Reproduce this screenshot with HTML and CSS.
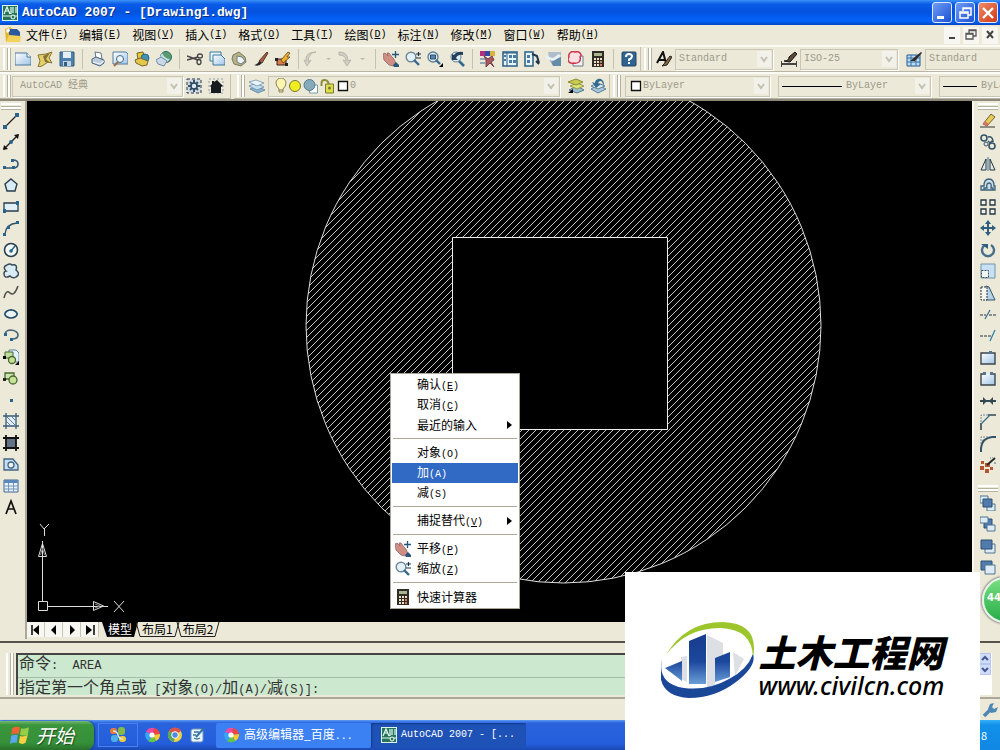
FILE: index.html
```
<!DOCTYPE html>
<html lang="zh-CN">
<head>
    <meta charset="UTF-8">
    <meta name="viewport" content="width=device-width, initial-scale=1.0">
    <title>AutoCAD 2007 - [Drawing1.dwg]</title>
    <link rel="stylesheet" href="styles.css">
</head>
<body>

<!-- Shared icons -->
<svg class="defs" aria-hidden="true">
    <defs>
        <linearGradient id="paper" x1="0" y1="0" x2="1" y2="1"><stop offset="0" stop-color="#fff"/><stop offset="1" stop-color="#9fc4e6"/></linearGradient>
        <linearGradient id="tower" x1="0" y1="0" x2="0" y2="1"><stop offset="0" stop-color="#173c8c"/><stop offset=".55" stop-color="#1c489c"/><stop offset="1" stop-color="#6a9ed8"/></linearGradient>
        <pattern id="hatch" width="7" height="7" patternUnits="userSpaceOnUse"><path d="M-1 8L8 -1M-1 1L1 -1M6 8L8 6" stroke="#dedede" stroke-width=".9"/></pattern>
    </defs>
    <symbol id="chevron" viewBox="0 0 14 16"><path d="M0 0h14v16H0z" fill="#f3f2ea"/><path d="M4 6l3 4 3-4" fill="none" stroke="#c4c1b0" stroke-width="2"/></symbol>
    <symbol id="pan" viewBox="0 0 16 16"><path d="M0 3l2-1 3 3-1-3 2 0 3 4 2 2 2 5-3 2-4-1-5-5z" fill="#cf8d84" stroke="#8d5f60" stroke-width=".7"/><path d="M10 14l3-3 3 3v2h-5z" fill="#2b5679"/><path d="M12.500 0v7M9 3.500h7" stroke="#24577b" stroke-width="1.300"/></symbol>
    <symbol id="zoom" viewBox="0 0 16 16"><circle cx="6" cy="6" r="4.800" fill="#e4f1f8" stroke="#6c8797" stroke-width="1.400"/><path d="M9 9l5 5" stroke="#36678d" stroke-width="2.400"/><path d="M11 3h5M13.500 1v4M11 7h5" stroke="#173247" stroke-width="1.200"/></symbol>
    <symbol id="calc" viewBox="0 0 16 16"><path d="M2 0h12v16H2z" fill="#302b25"/><path d="M4 2h8v3H4z" fill="#a8b58f"/><path d="M4 7h2v2H4zm3 0h2v2H7zm3 0h2v2h-2zM4 10h2v2H4zm3 0h2v2H7zM4 13h2v2H4zm3 0h2v2H7z" fill="#eee1c8"/><path d="M10 10h2v2h-2zm0 3h2v2h-2z" fill="#d87c60"/></symbol>
    <symbol id="cad" viewBox="0 0 16 16"><path d="M0 0h16v16H0z" fill="#dff6e7"/><path d="M1 1h14v14H1z" fill="#28735b"/><path d="M2 9l3-7 3 7M3 6h4M9 2v7M11 2v6M14 2v6M1 11h14" fill="none" stroke="#e4fff2" stroke-width="1.200"/><circle cx="11" cy="12" r="2" fill="#28735b" stroke="#fff"/></symbol>
    <symbol id="wheel" viewBox="0 0 16 16"><path d="M8 8L1 5a7.500 7.500 0 0 1 8-4z" fill="#f04aa0"/><path d="M8 8l1-7a7.500 7.500 0 0 1 6 6z" fill="#f3443f"/><path d="M8 8l7-1a7.500 7.500 0 0 1-4 7z" fill="#ffc928"/><path d="M8 8l3 6a7.500 7.500 0 0 1-8 0z" fill="#61c749"/><path d="M8 8l-5 6a7.500 7.500 0 0 1-2-9z" fill="#37a5f4"/><circle cx="7" cy="8" r="2.600" fill="#fff"/></symbol>
    <symbol id="layers" viewBox="0 0 16 16"><path d="M1 11l8 4 7-3-8-4z" fill="#91b4ce" stroke="#4d789d" stroke-width=".7"/><path d="M0 8l8 4 7-3-8-4z" fill="#c5def0" stroke="#5780a1" stroke-width=".7"/><path d="M0 4l8 4 7-3-8-3z" fill="#e9f4fb" stroke="#6285a1" stroke-width=".7"/></symbol>
</svg>

<header class="titlebar">
    <svg class="icon"><use href="#cad"/></svg>
    <h1>AutoCAD 2007 - [Drawing1.dwg]</h1>
    <div class="window-buttons">
        <button aria-label="最小化"><svg viewBox="0 0 16 16"><path d="M3 11h7v3H3z" fill="#fff"/></svg></button>
        <button aria-label="还原"><svg viewBox="0 0 16 16"><path d="M6 6V3h8v7h-3M3 7h8v6H3zM3 8h8M6 3.500h8" fill="none" stroke="#fff" stroke-width="1.500"/></svg></button>
        <button class="close" aria-label="关闭"><svg viewBox="0 0 16 16"><path d="M3 3l10 10M13 3L3 13" stroke="#fff" stroke-width="2.400"/></svg></button>
    </div>
</header>

<nav class="menubar">
    <svg class="icon" viewBox="0 0 16 16"><path d="M0 2l5-2 4 3 6 4v8H1z" fill="#e5b52c"/><path d="M4 2h8l3 3v6H4z" fill="#2b599b"/><path d="M1 3l3-2 1 3-3 2z" fill="#fff"/><path d="M1 15l3-7 12 1-1 6z" fill="#f4d259"/></svg>
    <button>文件<span class="en">(<u>F</u>)</span></button>
    <button>编辑<span class="en">(<u>E</u>)</span></button>
    <button>视图<span class="en">(<u>V</u>)</span></button>
    <button>插入<span class="en">(<u>I</u>)</span></button>
    <button>格式<span class="en">(<u>O</u>)</span></button>
    <button>工具<span class="en">(<u>T</u>)</span></button>
    <button>绘图<span class="en">(<u>D</u>)</span></button>
    <button>标注<span class="en">(<u>N</u>)</span></button>
    <button>修改<span class="en">(<u>M</u>)</span></button>
    <button>窗口<span class="en">(<u>W</u>)</span></button>
    <button>帮助<span class="en">(<u>H</u>)</span></button>
    <div class="doc-buttons">
        <button aria-label="最小化图形"><svg viewBox="0 0 16 16"><path d="M5 11h6" stroke="#444" stroke-width="2"/></svg></button>
        <button aria-label="还原图形"><svg viewBox="0 0 16 16"><path d="M6 6V3h7v6h-3M3 6.500h7V12H3zM3 7h7M6 3.500h7" fill="none" stroke="#555" stroke-width="1.300"/></svg></button>
        <button aria-label="关闭图形"><svg viewBox="0 0 16 16"><path d="M5 4l6 7M11 4l-6 7" stroke="#444" stroke-width="2"/></svg></button>
    </div>
</nav>

<div class="toolbar-row">
    <div class="toolbar">
        <span class="grip"></span>
        <button aria-label="新建"><svg viewBox="0 0 16 16"><path d="M0 2h12l4 4v8H0z" fill="url(#paper)" stroke="#47799d"/><path d="M12 2v4h4" fill="#fff" stroke="#47799d"/></svg></button>
        <button aria-label="打开"><svg viewBox="0 0 16 16"><path d="M1 4l8-1 6-2-3 6 3 5-4-1-6 4-4 1 2-6z" fill="#e4cf68" stroke="#837638"/><path d="M6 5l7-3-4 6 4 4-5-1z" fill="#877333"/></svg></button>
        <button aria-label="保存"><svg viewBox="0 0 16 16"><path d="M1 1h14v14H1z" fill="#4e80ac" stroke="#315c83"/><path d="M4 1h8v6H4z" fill="#e3f0f7"/><path d="M4 10h8v5H4z" fill="#bed4e3"/><path d="M5 11h3v4H5z" fill="#315c83"/></svg></button>
        <span class="sep"></span>
        <button aria-label="打印"><svg viewBox="0 0 16 16"><path d="M5 1l6 1 1 6-6-1z" fill="#fff" stroke="#5d7489"/><path d="M2 8l4-2 8 3v3l-4 3-8-3z" fill="#bccbdc" stroke="#4a637d"/><path d="M3 11l7 2 4-3" fill="none" stroke="#f5fbff"/></svg></button>
        <button aria-label="打印预览"><svg viewBox="0 0 16 16"><path d="M1 1h13l2 2v10H1z" fill="url(#paper)" stroke="#517c9e"/><circle cx="8" cy="8" r="3.500" fill="#eaf6fc" stroke="#426983"/><path d="M6 11l-4 4" stroke="#a36a44" stroke-width="2"/></svg></button>
        <button aria-label="发布"><svg viewBox="0 0 16 16"><path d="M3 2l6-1 2 7-7 1z" fill="#e9c92f" stroke="#75652c"/><circle cx="11" cy="7" r="4" fill="#4390b3" stroke="#286889"/><path d="M1 9l5-2 8 3-1 4-5 1-6-3z" fill="#e3c64c" stroke="#7d6630"/></svg></button>
        <button aria-label="三维 DWF"><svg viewBox="0 0 16 16"><circle cx="10" cy="6" r="5.500" fill="#5c9b70" stroke="#2e6c67"/><path d="M6 2q3 6 8 6l-3 3q-4-2-7-5z" fill="#c1e1e6"/><path d="M0 9l5-3 6 4-3 5-6-2z" fill="#cad9e6" stroke="#738ba4"/></svg></button>
        <span class="sep"></span>
        <button aria-label="剪切"><svg viewBox="0 0 16 16"><path d="M0 5l11 4M0 9l11-3" stroke="#444" stroke-width="1.500"/><ellipse cx="13" cy="5" rx="2.500" ry="2" fill="none" stroke="#444" stroke-width="1.300"/><ellipse cx="12" cy="11" rx="2" ry="2.500" fill="none" stroke="#444" stroke-width="1.300"/></svg></button>
        <button aria-label="复制"><svg viewBox="0 0 16 16"><path d="M1 1h11v9H1z" fill="#e8f5fc" stroke="#3d789f"/><path d="M4 4h8l4 4v6H4z" fill="url(#paper)" stroke="#3d789f"/></svg></button>
        <button aria-label="粘贴"><svg viewBox="0 0 16 16"><path d="M2 4l6-3 6 5 1 5-5 4-7-2-2-5z" fill="#b8b287" stroke="#797960"/><path d="M6 5l5 1 3 4-4 3-4-2z" fill="#edf5f8" stroke="#727f7c"/></svg></button>
        <button aria-label="特性匹配"><svg viewBox="0 0 16 16"><path d="M6 10L14 1l1 1-6 10z" fill="#ac5d3e" stroke="#54362c"/><path d="M1 14q4-1 5-4l3 2q-3 4-8 2z" fill="#292829"/></svg></button>
        <button aria-label="块编辑器"><svg viewBox="0 0 16 16"><path d="M2 8h9v6H2z" fill="#d77e4b" stroke="#352720"/><path d="M6 9l7-8 2 1-3 4h3l-7 6z" fill="#f3ad28" stroke="#594522" stroke-width=".8"/><path d="M0 7h3v3H0zm10 5h3v3h-3z" fill="#222"/></svg></button>
        <span class="sep"></span>
        <button class="narrow" aria-label="放弃"><svg viewBox="0 0 16 16"><path d="M13 1Q5 2 5 11l3-2-4 6-3-6 2 1Q2 1 13 1z" fill="#d6d3c8" stroke="#b9b6aa"/></svg></button>
        <button class="drop" aria-label="放弃列表"><svg viewBox="0 0 16 16"><path d="M6 7h5l-2.500 2z" fill="#bbb8aa"/></svg></button>
        <button class="narrow" aria-label="重做"><svg viewBox="0 0 16 16"><path d="M2 1q9 0 9 9l3-1-4 6-4-6 3 1Q9 4 2 4z" fill="#d1cec3" stroke="#b9b6aa"/></svg></button>
        <button class="drop" aria-label="重做列表"><svg viewBox="0 0 16 16"><path d="M6 7h5l-2.500 2z" fill="#bbb8aa"/></svg></button>
        <span class="sep"></span>
        <button aria-label="实时平移"><svg><use href="#pan"/></svg></button>
        <button aria-label="实时缩放"><svg><use href="#zoom"/></svg></button>
        <button aria-label="窗口缩放"><svg viewBox="0 0 16 16"><circle cx="6" cy="6" r="5" fill="#dfeffa" stroke="#627f94" stroke-width="1.400"/><path d="M3.500 4h5v4h-5z" fill="#5b83ab" stroke="#294c6e"/><path d="M9 9l4 4" stroke="#36678d" stroke-width="2.400"/><path d="M16 12v4h-4z"/></svg></button>
        <button aria-label="缩放上一个"><svg viewBox="0 0 16 16"><circle cx="7" cy="6" r="5" fill="#dfeffa" stroke="#627f94"/><path d="M14 1Q8 0 5 4L3 3v6h6L7 7q2-4 7-3z" fill="#263f5a"/><path d="M10 10l5 5" stroke="#36678d" stroke-width="2.600"/></svg></button>
        <span class="sep"></span>
        <button aria-label="特性"><svg viewBox="0 0 16 16"><path d="M0 0h5v5H0z" fill="#b32e7b"/><path d="M5 0h5v5H5z" fill="#3347a5"/><path d="M10 0h5v5h-5z" fill="#d5b542"/><path d="M0 7h5v2H0zm0 4h5v2H0z" fill="#92a8b5"/><path d="M4 5l4 3 4-3 2 4-3 2 3 5-4-4-4 4V9z" fill="#a7585b" stroke="#743c4f"/></svg></button>
        <button aria-label="设计中心"><svg viewBox="0 0 16 16"><path d="M1 1h14v14H1z" fill="#e8f5fb" stroke="#285f87" stroke-width="1.500"/><path d="M5 1v14M1 2h14" stroke="#285f87"/><path d="M7 4h3v3H7zm4 0h3v3h-3zM7 9h3v3H7zm4 0h3v3h-3zM2 4h2v2H2zm0 4h2v2H2z" fill="#477ca5"/></svg></button>
        <button aria-label="工具选项板"><svg viewBox="0 0 16 16"><path d="M1 1h8v14H1z" fill="#e8f5fb" stroke="#285f87" stroke-width="1.500"/><path d="M3 4h3v3H3zm0 5h3v3H3z" fill="#477ca5"/><path d="M8 3l5 2 2 7M12 10l3 3" fill="none" stroke="#1e344a" stroke-width="2"/></svg></button>
        <button aria-label="图纸集"><svg viewBox="0 0 16 16"><path d="M2 1h13v10H4z" fill="#aebdca"/><path d="M0 5l7 2 6-4 2 2-7 5-8-2z" fill="#eaf1f5"/><path d="M5 11l10-5v9H7z" fill="#648ba8"/></svg></button>
        <button aria-label="标记集"><svg viewBox="0 0 16 16"><path d="M5 5h10v10H5z" fill="#eef4f5" stroke="#6e7885"/><path d="M3 1q2-1 4 0 3-1 5 1 2 2 0 4 1 3-1 5-3 2-5 1-3 1-5-1-2-3 0-5-1-3 2-5z" fill="#fae0e1" stroke="#ce3550" stroke-width="1.500"/></svg></button>
        <button aria-label="快速计算器"><svg><use href="#calc"/></svg></button>
        <span class="sep"></span>
        <button aria-label="帮助"><svg viewBox="0 0 16 16"><rect x="1" y="1" width="14" height="14" rx="1" fill="#2f6391" stroke="#244465"/><path d="M5 6q0-3 3-3t3 2.500Q11 7 8 8.500V10" fill="none" stroke="#fff" stroke-width="2"/><path d="M7 11h2v2H7z" fill="#fff"/></svg></button>
    </div>
    <div class="toolbar styles">
        <span class="grip"></span>
        <button aria-label="文字样式"><svg viewBox="0 0 16 16"><path d="M1 12L7 1l3 11M3 9h6" fill="none" stroke="#111" stroke-width="2"/><path d="M8 13l6-8 2 1-5 8-5 1z" fill="#8b6742" stroke="#222"/></svg></button>
        <div class="combo"><select disabled aria-label="文字样式控制"><option>Standard</option></select><svg class="chevron"><use href="#chevron"/></svg></div>
        <button aria-label="标注样式"><svg viewBox="0 0 16 16"><path d="M0 10v6M16 10v6M1 13h14" stroke="#111" stroke-width="1.500"/><path d="M3 10q5 0 5-4l6-5 2 2-7 8z" fill="#5d4735" stroke="#111"/></svg></button>
        <div class="combo"><select disabled aria-label="标注样式控制"><option>ISO-25</option></select><svg class="chevron"><use href="#chevron"/></svg></div>
        <button aria-label="表格样式"><svg viewBox="0 0 16 16"><path d="M1 4h13v11H1z" fill="#bcdcf4" stroke="#255b93"/><path d="M1 7h13M1 11h13M5 4v11M10 4v11" stroke="#386fa0"/><path d="M4 10l5-4 6-5 1 1-7 8z" fill="#302b28"/></svg></button>
        <div class="combo"><select disabled aria-label="表格样式控制"><option>Standard</option></select><svg class="chevron"><use href="#chevron"/></svg></div>
    </div>
</div>

<div class="toolbar-row">
    <div class="toolbar workspaces">
        <span class="grip"></span>
        <div class="combo workspace"><select disabled aria-label="工作空间"><option>AutoCAD 经典</option></select><svg class="chevron"><use href="#chevron"/></svg></div>
        <button aria-label="工作空间设置"><svg viewBox="0 0 16 16"><path d="M1 1h14v14H1z" fill="#d4dade" stroke="#28394b" stroke-dasharray="3 2"/><path d="M8 2v12M2 8h12M4 4l8 8M12 4l-8 8" stroke="#35536c" stroke-width="2"/><circle cx="8" cy="8" r="3" fill="#dbe6ed" stroke="#29475f" stroke-width="1.500"/></svg></button>
        <button aria-label="我的工作空间"><svg viewBox="0 0 16 16"><path d="M1 1h14v14H1z" fill="none" stroke="#8fa0ac" stroke-dasharray="2 2"/><path d="M2 8l2-2V3h2v1l3-2 6 6-2 1v6H3V9z" fill="#181b1d"/></svg></button>
    </div>
    <div class="toolbar">
        <span class="grip"></span>
        <button aria-label="图层特性"><svg><use href="#layers"/></svg></button>
        <div class="combo layer">
            <svg viewBox="0 0 12 16"><path d="M4 11q-3-3-3-6a5 5 0 0 1 10 0q0 3-3 6v3H4z" fill="#fff4b0" stroke="#8a8550"/><path d="M4 12h4" stroke="#777"/></svg>
            <svg viewBox="0 0 14 16"><circle cx="7" cy="8" r="5.500" fill="#f0ed21" stroke="#77783a"/></svg>
            <svg class="wide" viewBox="0 0 16 16"><path d="M7 7h8v8H7z" fill="#fff" stroke="#7a9ba8"/><circle cx="7" cy="7" r="5.500" fill="#87aaba" stroke="#527e91"/></svg>
            <svg class="wide" viewBox="0 0 16 16"><path d="M2 8V5q0-3 3-3t4 3v3" fill="none" stroke="#8e8f37" stroke-width="2"/><path d="M6 6h8v9H6z" fill="#dfde49" stroke="#777b35"/><circle cx="10" cy="10" r="1.500" fill="#777b35"/></svg>
            <svg viewBox="0 0 12 16"><path d="M1.500 3.500h9v9h-9z" fill="#fff" stroke="#111" stroke-width="1.300"/></svg>
            <select disabled aria-label="图层"><option>0</option></select><svg class="chevron"><use href="#chevron"/></svg>
        </div>
        <button aria-label="置为当前图层"><svg viewBox="0 0 16 16"><path d="M1 12l8 3 7-3-7-4z" fill="#9bbed0" stroke="#53758c"/><path d="M2 8l7 3 7-3-7-3z" fill="#dce17b" stroke="#95993e"/><path d="M0 4l8 3 7-3-7-3z" fill="#c9cc52" stroke="#8a8c32"/><path d="M0 15l5-4v4z"/></svg></button>
        <button aria-label="上一个图层"><svg viewBox="0 0 16 16"><path d="M1 11l7 4 8-4-8-4z" fill="#a8c4d7" stroke="#5b819c"/><path d="M1 8l7 3 7-3-7-3z" fill="#dbe8f0" stroke="#5b819c"/><path d="M14 5q-2-5-6-4Q5 2 5 5L2 4l4 6 5-4-3 0q0-3 3-3 2 1 2 5z" fill="#2d6a91"/></svg></button>
    </div>
    <div class="toolbar properties">
        <span class="grip"></span>
        <div class="combo"><svg viewBox="0 0 12 16"><path d="M1.500 3.500h9v9h-9z" fill="#fff" stroke="#111" stroke-width="1.300"/></svg><select disabled aria-label="颜色"><option>ByLayer</option></select><svg class="chevron"><use href="#chevron"/></svg></div>
        <div class="combo"><span class="line-sample"></span><select disabled aria-label="线型"><option>ByLayer</option></select><svg class="chevron"><use href="#chevron"/></svg></div>
        <div class="combo"><span class="line-sample short"></span><select disabled aria-label="线宽"><option>ByLayer</option></select><svg class="chevron"><use href="#chevron"/></svg></div>
    </div>
</div>

<main class="workspace-area">
    <aside class="tools">
        <span class="grip flat"></span>
        <div class="tool-list draw">
            <button aria-label="直线"><svg viewBox="0 0 16 16"><path d="M2 14L14 2" stroke="#222" stroke-width="1.300"/><path d="M0 12h4v4H0zM12 0h4v4h-4z" fill="#28658d"/></svg></button>
            <button aria-label="构造线"><svg viewBox="0 0 16 16"><path d="M1 15L15 1" stroke="#222" stroke-width="1.500"/><path d="M0 16l1-5 4 4zM16 0l-5 1 4 4z" fill="#111"/><circle cx="8" cy="8" r="2" fill="#28658d"/></svg></button>
            <button aria-label="多段线"><svg viewBox="0 0 16 16"><path d="M2 12h8q5 0 5-4t-5-4" fill="none" stroke="#36566e" stroke-width="1.600"/><path d="M0 10h3v3H0zm9 0h3v3H9zM8 3h3v3H8z" fill="#28658d"/></svg></button>
            <button aria-label="正多边形"><svg viewBox="0 0 16 16"><path d="M8 2l6 5-2 7H4L2 7z" fill="#d9ebf5" stroke="#293c4a" stroke-width="1.400"/></svg></button>
            <button aria-label="矩形"><svg viewBox="0 0 16 16"><path d="M1 4h14v8H1z" fill="#e1f0f8" stroke="#293c4a" stroke-width="1.300"/><path d="M0 10h3v4H0zM13 2h3v4h-3z" fill="#28658d"/></svg></button>
            <button aria-label="圆弧"><svg viewBox="0 0 16 16"><path d="M2 14Q3 4 14 3" fill="none" stroke="#335166" stroke-width="1.400"/><path d="M0 13h3v3H0zM4 6h3v3H4zm9-5h3v3h-3z" fill="#28658d"/></svg></button>
            <button aria-label="圆"><svg viewBox="0 0 16 16"><circle cx="8" cy="8" r="6.500" fill="#f4f8f5" stroke="#273f50" stroke-width="1.600"/><path d="M8 9l4-5" stroke="#28658d" stroke-width="1.500"/><circle cx="8" cy="9" r="1.800" fill="#28658d"/></svg></button>
            <button aria-label="修订云线"><svg viewBox="0 0 16 16"><path d="M3 8Q-1 4 4 2q3-2 5 0 6-1 4 5 5 4 0 7-3 2-6-1-6 3-6-2 0-3 2-3z" fill="#d9ebf5" stroke="#3b4b55" stroke-width="1.500"/></svg></button>
            <button aria-label="样条曲线"><svg viewBox="0 0 16 16"><path d="M1 14Q3 5 7 9t8-7" fill="none" stroke="#4c4d48" stroke-width="1.500"/></svg></button>
            <button aria-label="椭圆"><svg viewBox="0 0 16 16"><ellipse cx="8" cy="8" rx="6" ry="4" fill="#eaf3f5" stroke="#294b67" stroke-width="1.700"/><path d="M1 7h2v2H1zm12 0h2v2h-2zM7 3h2v2H7z" fill="#28658d"/></svg></button>
            <button aria-label="椭圆弧"><svg viewBox="0 0 16 16"><path d="M2 7Q3 3 8 3q7 1 7 5t-6 4" fill="none" stroke="#4c687b" stroke-width="1.700"/><path d="M1 6h3v3H1zm6 5h3v3H7z" fill="#28658d"/></svg></button>
            <button aria-label="插入块"><svg viewBox="0 0 16 16"><path d="M6 1h7l3 3v9H6z" fill="#e1f2fc" stroke="#5e839e"/><path d="M2 3h8v6H2z" fill="#c3dfa0" stroke="#47672e"/><circle cx="9" cy="11" r="3.500" fill="#c5e297" stroke="#47672e" stroke-width="1.300"/><path d="M0 7h3v3H0zM16 12v4h-4z"/></svg></button>
            <button aria-label="创建块"><svg viewBox="0 0 16 16"><path d="M2 3h9v6H2z" fill="#cfe5b1" stroke="#47672e" stroke-width="1.300"/><circle cx="10" cy="10" r="4" fill="#c5e297" stroke="#47672e" stroke-width="1.300"/><path d="M0 8h3v3H0z" fill="#222"/></svg></button>
            <button aria-label="点"><svg viewBox="0 0 16 16"><path d="M7 7h3v3H7z" fill="#28658d"/></svg></button>
            <button aria-label="图案填充"><svg viewBox="0 0 16 16"><path d="M3 3h10v10H3z" fill="#e4eef5"/><path d="M3 0v16M13 0v16M0 3h16M0 13h16" stroke="#385b78" stroke-width="1.300"/><path d="M3 8l5 5M4 4l9 9M8 3l5 5" stroke="#5c7f9b"/></svg></button>
            <button aria-label="渐变色"><svg viewBox="0 0 16 16"><path d="M3 3h10v10H3z" fill="#637386"/><path d="M3 0v16M13 0v16M0 3h16M0 13h16" stroke="#111" stroke-width="1.800"/></svg></button>
            <button aria-label="面域"><svg viewBox="0 0 16 16"><path d="M1 3h9l5 6v5H1z" fill="#c6def0" stroke="#416685" stroke-width="1.300"/><circle cx="8" cy="9" r="3" fill="#f0f6f7" stroke="#416685" stroke-width="1.300"/></svg></button>
            <button aria-label="表格"><svg viewBox="0 0 16 16"><path d="M1 2h14v12H1z" fill="#e6f2fa" stroke="#456795"/><path d="M1 2h14v3H1z" fill="#5a88bd"/><path d="M1 8h14M1 11h14M5.500 5v9M10.500 5v9" stroke="#7597bc"/></svg></button>
            <button aria-label="多行文字"><svg viewBox="0 0 16 16"><path d="M3 15L8 2l5 13M5 10h6" fill="none" stroke="#111" stroke-width="1.700"/></svg></button>
        </div>
    </aside>

    <section class="document">
        <div class="canvas">
            <svg class="drawing" width="945" height="521" viewBox="27 101 945 521">
                <circle cx="563.500" cy="325.500" r="257.500" fill="url(#hatch)" stroke="#ddd"/>
                <path d="M452.500 237.500h215v192h-215z" fill="#000" stroke="#eee"/>
            </svg>
            <svg class="ucs" width="90" height="96" viewBox="36 520 90 96" fill="none" stroke="#ddd">
                <path d="M42.500 601v-60M47 606.500h61M38.500 601.500h9v9h-9zM38.500 556.500l4-13 4 13zM93.500 601.500l10 4.500-10 4.500zM40 524l4 5 5-5M44.500 529v7M114 601l10 11M124 601l-10 11"/>
                <path d="M40.500 555l2-7 2 7M95 604l5 2-5 2" stroke="#888"/>
            </svg>
        </div>
        <div class="layout-tabs">
            <button class="arrow" aria-label="第一个"><svg viewBox="0 0 16 16"><path d="M4 3v10" stroke="#000" stroke-width="1.500"/><path d="M11 3v10L5 8z"/></svg></button>
            <button class="arrow" aria-label="上一个"><svg viewBox="0 0 16 16"><path d="M10 3v10L5 8z"/></svg></button>
            <button class="arrow" aria-label="下一个"><svg viewBox="0 0 16 16"><path d="M6 3v10l5-5z"/></svg></button>
            <button class="arrow" aria-label="最后一个"><svg viewBox="0 0 16 16"><path d="M4 3v10l6-5z"/><path d="M12 3v10" stroke="#000" stroke-width="1.500"/></svg></button>
            <button class="tab current"><svg viewBox="0 0 7 15"><path d="M1 0l5 15h1V0z"/></svg><span>模型</span><svg viewBox="0 0 7 15"><path d="M0 0h6L2 15H0z"/></svg></button>
            <button class="tab"><svg viewBox="0 0 7 15"><path d="M1 0l4 14.500h2" fill="none" stroke="#222"/></svg><span>布局1</span><svg viewBox="0 0 7 15"><path d="M6 0L2 14.500H0" fill="none" stroke="#222"/></svg></button>
            <button class="tab"><svg viewBox="0 0 7 15"><path d="M1 0l4 14.500h2" fill="none" stroke="#222"/></svg><span>布局2</span><svg viewBox="0 0 7 15"><path d="M6 0L2 14.500H0" fill="none" stroke="#222"/></svg></button>
        </div>
    </section>

    <aside class="tools right">
        <span class="grip flat"></span>
        <div class="tool-list modify">
            <button aria-label="删除"><svg viewBox="0 0 16 16"><path d="M0 14h15" stroke="#333"/><path d="M3 11l8-10 4 3-8 9z" fill="#e6cb58" stroke="#716337"/><path d="M3 11l2-3 4 3-2 2z" fill="#d77167"/></svg></button>
            <button aria-label="复制对象"><svg viewBox="0 0 16 16"><circle cx="4" cy="4" r="3" fill="none" stroke="#36546c" stroke-width="1.600"/><circle cx="6" cy="10" r="2" fill="none" stroke="#36546c"/><circle cx="12" cy="12" r="3" fill="none" stroke="#36546c" stroke-width="1.600"/><path d="M8 3q5-1 5 5M13 6l-3 3-2-2" fill="none" stroke="#36546c" stroke-width="1.500"/></svg></button>
            <button aria-label="镜像"><svg viewBox="0 0 16 16"><path d="M1 14L6 3v11zM10 3l5 11h-5z" fill="#e2ebed" stroke="#27323b"/><path d="M8 1v14" stroke="#39749a"/></svg></button>
            <button aria-label="偏移"><svg viewBox="0 0 16 16"><path d="M1 13V9h3Q4 2 9 2t5 7h1v4zM4 13v-2h3q-1-5 2-5t2 5h2v2z" fill="#cbdde8" stroke="#3f6177" stroke-width="1.300"/></svg></button>
            <button aria-label="阵列"><svg viewBox="0 0 16 16"><path d="M1 1h5v5H1zm9 0h5v5h-5zM1 10h5v5H1zm9 0h5v5h-5z" fill="#f1f3ed" stroke="#253540" stroke-width="1.300"/></svg></button>
            <button aria-label="移动"><svg viewBox="0 0 16 16"><path d="M8 1v14M1 8h14" stroke="#315d7e" stroke-width="2"/><path d="M8 0l3 4H5zm0 16l-3-4h6zM0 8l4-3v6zm16 0l-4 3V5z" fill="#315d7e"/></svg></button>
            <button aria-label="旋转"><svg viewBox="0 0 16 16"><path d="M5 3a6 6 0 1 0 6 0" fill="none" stroke="#466f8b" stroke-width="2.400"/><path d="M1 2h7v5z" fill="#315d7e"/></svg></button>
            <button aria-label="缩放对象"><svg viewBox="0 0 16 16"><path d="M1 1h14v14H1z" fill="#c7e0f4" stroke="#7494ac"/><path d="M1.500 7.500h7v7h-7z" fill="#f5f6ee" stroke="#345167" stroke-dasharray="2 1"/></svg></button>
            <button aria-label="拉伸"><svg viewBox="0 0 16 16"><path d="M6 1l3 1 6 13H6z" fill="#b4d2e8" stroke="#36546c"/><path d="M1 2h6v13H1z" fill="#f6f6ee" stroke="#26333c" stroke-dasharray="2 1"/></svg></button>
            <button aria-label="修剪"><svg viewBox="0 0 16 16"><path d="M0 8h6M9 8h7" stroke="#293642" stroke-dasharray="3 1"/><path d="M5 12l5-9" stroke="#366b8e" stroke-width="1.200"/></svg></button>
            <button aria-label="延伸"><svg viewBox="0 0 16 16"><path d="M0 8h11" stroke="#293642" stroke-dasharray="3 1"/><path d="M10 13l5-11" stroke="#2c7ba9" stroke-width="1.200"/></svg></button>
            <button aria-label="打断于点"><svg viewBox="0 0 16 16"><path d="M1 3h14v11H1z" fill="url(#paper)" stroke="#3d4549" stroke-width="1.400"/><path d="M9 1h3v3H9z" fill="#527891"/></svg></button>
            <button aria-label="打断"><svg viewBox="0 0 16 16"><path d="M4 3H1v11h14V3h-3" fill="url(#paper)" stroke="#3d4549" stroke-width="1.400"/><path d="M3 1h3v3H3zm7 0h3v3h-3z" fill="#527891"/></svg></button>
            <button aria-label="合并"><svg viewBox="0 0 16 16"><path d="M0 8h16" stroke="#334852" stroke-width="2"/><path d="M3 4l4 4-4 4zm10 0L9 8l4 4z" fill="#334852"/></svg></button>
            <button aria-label="倒角"><svg viewBox="0 0 16 16"><path d="M1 16V9M8 1h8" fill="none" stroke="#364850" stroke-width="1.600"/><path d="M1 8V1h7" fill="none" stroke="#789" stroke-dasharray="2 1"/><path d="M1 10l9-9" stroke="#376e8d" stroke-width="1.300"/></svg></button>
            <button aria-label="圆角"><svg viewBox="0 0 16 16"><path d="M1 16v-4Q2 2 12 1h4" fill="none" stroke="#335268" stroke-width="2"/><path d="M1 8V1h7" fill="none" stroke="#789" stroke-dasharray="2 1"/></svg></button>
            <button aria-label="分解"><svg viewBox="0 0 16 16"><path d="M1 4h3v3H1zm4 2h5v4H5zM0 9h4v4H0zm5 3h4v4H5zm5-2h3v3h-3z" fill="#b65631"/><path d="M7 8l8-7" stroke="#27292b" stroke-width="2"/><path d="M10 1h1m3 5h2m-4-6h1" stroke="#48728c"/></svg></button>
        </div>
        <span class="grip flat second"></span>
        <div class="tool-list order">
            <button aria-label="前置"><svg viewBox="0 0 16 16"><path d="M0 1h8v7H0zm7 8h8v7H7z" fill="#dcebf5" stroke="#527490"/><path d="M3 4h9v8H3z" fill="#517bad" stroke="#2d5070"/></svg></button>
            <button aria-label="后置"><svg viewBox="0 0 16 16"><path d="M4 3h8v9H4z" fill="#517bad" stroke="#2d5070"/><path d="M0 1h8v6H0zm7 8h8v6H7z" fill="#dcebf5" stroke="#527490"/></svg></button>
            <button aria-label="置于对象之上"><svg viewBox="0 0 16 16"><path d="M5 6h10v9H5z" fill="#dcebf5" stroke="#527490"/><path d="M1 2h11v9H1z" fill="#517bad" stroke="#2d5070"/></svg></button>
            <button aria-label="置于对象之下"><svg viewBox="0 0 16 16"><path d="M1 2h11v9H1z" fill="#517bad" stroke="#2d5070"/><path d="M5 6h10v9H5z" fill="#dcebf5" stroke="#527490"/></svg></button>
        </div>
    </aside>
</main>

<section class="command">
    <span class="grip"></span>
    <div class="command-box">
        <p>命令<span class="en">:&nbsp; AREA</span></p>
        <p class="prompt">指定第一个角点或<span class="en"> [</span>对象<span class="en">(O)/</span>加<span class="en">(A)/</span>减<span class="en">(S)]:</span></p>
    </div>
    <div class="scroll">
        <button aria-label="向上"><svg viewBox="0 0 10 8"><path d="M2 5l3-3 3 3" fill="none" stroke="#41578d" stroke-width="2"/></svg></button>
        <button aria-label="向下"><svg viewBox="0 0 10 8"><path d="M2 2l3 3 3-3" fill="none" stroke="#41578d" stroke-width="2"/></svg></button>
    </div>
</section>

<div class="statusbar">
    <svg class="icon" viewBox="0 0 16 16"><path d="M2 14l7-7" stroke="#4d88b5" stroke-width="3.500"/><path d="M8 2l4-1-2 4 2 2 4-2-2 5-5 1-3-4z" fill="#4d88b5"/></svg>
</div>

<footer class="taskbar">
    <button class="start">
        <svg viewBox="0 0 18 18"><path d="M2 3q3-2 7-1L8 8Q4 7 1 9z" fill="#ee6336"/><path d="M10 3q3 1 7-1l-1 7q-3 1-7 0z" fill="#95cf49"/><path d="M1 10q3-2 6-1l-1 7q-3-1-6 1z" fill="#5aa8ef"/><path d="M9 10q3 1 7-1l-2 7q-3 2-6 0z" fill="#f7cf43"/></svg>
        开始
    </button>
    <button class="quick wide" aria-label="程序"><svg viewBox="0 0 16 16"><rect x="0" y="1" width="7" height="6" rx="3" fill="#e8793c"/><rect x="8" y="0" width="7" height="8" rx="3" fill="#85b944"/><rect x="1" y="8" width="7" height="7" rx="3" fill="#4fafe7"/><rect x="9" y="9" width="7" height="6" rx="3" fill="#f3ca3a"/><path d="M3 4q4 0 5 4t5 4" fill="none" stroke="#d8e5d0" stroke-width="1.500"/></svg></button>
    <button class="quick" aria-label="浏览器"><svg><use href="#wheel"/></svg></button>
    <button class="quick" aria-label="Chrome"><svg viewBox="0 0 16 16"><circle cx="8" cy="8" r="7" fill="#f0d147"/><path d="M8 8L2 4a7 7 0 0 1 12 0z" fill="#dc5443"/><path d="M8 8L2 4q-4 7 5 11z" fill="#58a55b"/><circle cx="8" cy="8" r="3.300" fill="#4c8ae2" stroke="#fff"/></svg></button>
    <button class="quick" aria-label="桌面"><svg viewBox="0 0 16 16"><rect x="2" y="2" width="12" height="13" rx="2" fill="#eaf6fd" stroke="#6a95b9"/><path d="M5 5h5M4 8h3M5 11q3 2 6 0" fill="none" stroke="#37739d" stroke-width="1.300"/><path d="M7 10l8-9" stroke="#37739d" stroke-width="2"/></svg></button>
    <button class="task"><svg><use href="#wheel"/></svg><span>高级编辑器_百度<span class="en">...</span></span></button>
    <button class="task pressed"><svg><use href="#cad"/></svg><span class="en">AutoCAD 2007 - [...</span></button>
    <div class="tray">8</div>
</footer>

<!-- Right-click menu of the AREA command -->
<div class="context-menu" role="menu">
    <button role="menuitem"><span>确认<span class="en">(<u>E</u>)</span></span></button>
    <button role="menuitem"><span>取消<span class="en">(<u>C</u>)</span></span></button>
    <button role="menuitem"><span>最近的输入</span><svg class="more" viewBox="0 0 5 8"><path d="M0 0v8l5-4z"/></svg></button>
    <hr>
    <button role="menuitem"><span>对象<span class="en">(O)</span></span></button>
    <button role="menuitem" class="selected"><span>加<span class="en">(A)</span></span></button>
    <button role="menuitem"><span>减<span class="en">(S)</span></span></button>
    <hr>
    <button role="menuitem"><span>捕捉替代<span class="en">(<u>V</u>)</span></span><svg class="more" viewBox="0 0 5 8"><path d="M0 0v8l5-4z"/></svg></button>
    <hr>
    <button role="menuitem" class="has-icon"><svg><use href="#pan"/></svg><span>平移<span class="en">(<u>P</u>)</span></span></button>
    <button role="menuitem" class="has-icon"><svg><use href="#zoom"/></svg><span>缩放<span class="en">(<u>Z</u>)</span></span></button>
    <hr>
    <button role="menuitem" class="has-icon"><svg><use href="#calc"/></svg><span>快速计算器</span></button>
</div>

<div class="badge">44</div>

<div class="watermark">
    <svg viewBox="0 0 94 78">
        <path d="M5 33Q24 0 62 0q31 1 31 26 0 6-1 9-1-28-33-29Q25 6 5 33z" fill="#9dc62d"/>
        <path d="M46 13l16 8v18l-8 4v23h-8zM72 30l11 7-9 17zM20 35l6-1v26l-6-3z" fill="#dcdfe4"/>
        <path d="M28 19l17-7v50H28zM54 36l15-6v25l-15 5zM4 46l17-7v20z" fill="url(#tower)"/>
        <path d="M1 37q-5 25 22 29 24 3 45-9 18-9 24-25 4 12-17 28-21 16-47 16Q-8 74 1 37z" fill="#1b4799"/>
    </svg>
    <div>
        <strong>土木工程网</strong>
        <em>www.civilcn.com</em>
    </div>
</div>

</body>
</html>
```
FILE: styles.css
```
* {
    box-sizing: border-box;
}

body {
    position: relative;
    display: flex;
    flex-direction: column;
    height: 100vh;
    margin: 0;
    overflow: hidden;
    background-color: #ece9d8;
    color: #000;
    font-family: "Noto Sans CJK SC", sans-serif;
    font-size: 12px;
    line-height: 16px;
}

button,
select {
    margin: 0;
    padding: 0;
    border: none;
    background: none;
    color: inherit;
    font: inherit;
}

button {
    display: flex;
    align-items: center;
    justify-content: center;
    flex-shrink: 0;
    white-space: nowrap;
}

svg {
    flex-shrink: 0;
}

.defs {
    position: absolute;
    width: 0;
    height: 0;
}

.icon,
button svg {
    width: 16px;
    height: 16px;
}

.en {
    font-family: "Liberation Mono", monospace;
    font-size: 10px;
    white-space: pre;
}

/* Title bar and menu */
.titlebar {
    display: flex;
    align-items: center;
    gap: 4px;
    flex-shrink: 0;
    height: 25px;
    padding: 0 2px;
    background: linear-gradient(#3b92f5 0, #0a5ce8 4px, #0453df 12px, #0464fb 21px, #0345c4 25px);
    color: #fff;
}

.titlebar h1 {
    margin: 0;
    font-family: "Liberation Mono", monospace;
    font-size: 13px;
    text-shadow: 1px 1px #0a2f86;
}

.window-buttons {
    display: flex;
    gap: 3px;
    margin-left: auto;
}

.window-buttons button {
    width: 20px;
    height: 21px;
    border: 1px solid #dce9ff;
    border-radius: 3px;
    background: linear-gradient(135deg, #6e9df5, #1c50d6);
}

.window-buttons .close {
    background: linear-gradient(135deg, #ef8a68, #cf3a16);
}

.menubar {
    display: flex;
    align-items: center;
    gap: 11px;
    flex-shrink: 0;
    height: 20px;
    padding-left: 5px;
}

.menubar .icon {
    margin-right: -6px;
}

.doc-buttons {
    display: flex;
    gap: 3px;
    margin-left: auto;
    padding-right: 2px;
}

.doc-buttons button {
    width: 16px;
    height: 17px;
    background-color: #f7f6f1;
}

/* Toolbars */
.toolbar-row {
    display: flex;
    flex-shrink: 0;
    height: 27px;
    overflow: hidden;
    border-top: 2px solid #fbfaf5;
}

.toolbar {
    display: flex;
    align-items: center;
    flex-shrink: 0;
    padding-left: 3px;
    border-right: 1px solid #c5c2b2;
    border-bottom: 1px solid #b9b5a2;
}

.toolbar button {
    width: 22px;
    height: 22px;
}

.toolbar .narrow {
    width: 16px;
}

.toolbar .drop {
    width: 18px;
}

.grip {
    flex-shrink: 0;
    width: 7px;
    height: 22px;
    margin-right: 2px;
    border: solid #fff;
    border-width: 0 2px;
    box-shadow: 1px 0 #b5b2a0, inset -1px 0 #b5b2a0;
}

.sep {
    width: 1px;
    height: 20px;
    margin: 0 4px;
    background-color: #c5c2b2;
}

.combo {
    display: flex;
    align-items: center;
    width: 98px;
    height: 21px;
    margin-right: 5px;
    padding: 1px 1px 1px 3px;
    border: 1px solid #c9c6b5;
    box-shadow: 1px 1px #fff;
}

.combo svg {
    width: 14px;
    height: 16px;
}

.combo .wide {
    width: 17px;
}

.combo select {
    flex: 1;
    min-width: 0;
    appearance: none;
    color: #9d9a8a;
    opacity: 1;
    font-family: "Liberation Mono", "Noto Sans CJK SC", monospace;
    font-size: 10px;
}

.combo.workspace {
    width: 171px;
    padding-left: 7px;
}

.combo.layer {
    width: 292px;
    padding-left: 5px;
}

.workspaces {
    padding-right: 3px;
    margin-right: 3px;
}

.workspaces .combo {
    margin-right: 0;
}

.properties .grip {
    margin-right: 5px;
}

.properties .combo {
    width: 153px;
    margin-right: 8px;
}

.properties .combo:nth-child(2) {
    width: 145px;
}

.line-sample {
    width: 60px;
    height: 1px;
    margin-right: 4px;
    background-color: #000;
}

.line-sample.short {
    width: 34px;
}

/* Drawing area with a tool column on each side */
.workspace-area {
    display: flex;
    flex: 1;
    min-height: 0;
    border-top: 2px solid #8d8a7b;
}

.tools {
    display: flex;
    flex-direction: column;
    align-items: center;
    flex-shrink: 0;
    width: 27px;
    padding: 2px 3px 0 0;
    border-right: 2px solid #aca899;
}

.tools.right {
    width: 28px;
    padding: 2px 0 0 2px;
    border-right: none;
    border-left: 2px solid #f8f7f0;
}

.grip.flat {
    width: 20px;
    height: 6px;
    margin: 0 0 1px;
    border-width: 2px 0;
    box-shadow: 0 1px #b5b2a0, inset 0 -1px #b5b2a0;
}

.grip.second {
    margin-top: 9px;
}

.tool-list {
    display: flex;
    flex-direction: column;
}

.tool-list button {
    flex: 1;
    width: 22px;
}

.draw {
    width: 22px;
    height: 408px;
}

.modify {
    height: 366px;
}

.order {
    height: 86px;
}

.document {
    display: flex;
    flex-direction: column;
    flex: 1;
    min-width: 0;
}

.canvas {
    position: relative;
    flex: 1;
    min-height: 0;
    overflow: hidden;
    background-color: #000;
}

.drawing {
    display: block;
}

.ucs {
    position: absolute;
    left: 9px;
    bottom: 6px;
}

.layout-tabs {
    display: flex;
    flex-shrink: 0;
    height: 17px;
    padding-bottom: 2px;
}

.layout-tabs .arrow {
    width: 18px;
    border-right: 1px solid #c8c5b6;
    background-color: #f7f6f0;
}

.tab svg {
    width: 7px;
    height: 15px;
}

.tab span {
    height: 15px;
    line-height: 14px;
    border-bottom: 1px solid #222;
}

.tab.current {
    margin-left: 2px;
}

.tab.current span {
    background-color: #000;
    color: #fff;
}

.tab + .tab {
    margin-left: -4px;
}

/* Command line */
.command {
    display: flex;
    flex-shrink: 0;
    height: 58px;
    margin-top: 2px;
    padding: 10px 8px 2px 6px;
    border-top: 2px solid #55534a;
    border-bottom: 2px solid #aca899;
}

.command .grip {
    height: 42px;
    margin-right: 3px;
}

.command-box {
    flex: 1;
    border: 2px solid #444;
    border-right: none;
    border-bottom: none;
    background-color: #cce8cf;
    color: #333;
    font-size: 16px;
}

.command-box .en {
    font-size: 12px;
}

.command-box p {
    height: 22px;
    margin: 0;
    padding-left: 1px;
    line-height: 14px;
}

.command-box .prompt {
    border-top: 1px solid #a8bda8;
    line-height: 16px;
}

.scroll {
    width: 14px;
    background-color: #fff;
}

.scroll button {
    width: 13px;
    height: 11px;
    border: 1px solid #b4c4ec;
    background-color: #cfdcfa;
}

.scroll svg {
    width: 10px;
    height: 8px;
}

.statusbar {
    display: flex;
    align-items: center;
    justify-content: flex-end;
    flex-shrink: 0;
    height: 21px;
    padding-right: 2px;
}

/* Taskbar */
.taskbar {
    display: flex;
    align-items: center;
    flex-shrink: 0;
    height: 30px;
    background: linear-gradient(#5b9bf5 0, #2a63dc 3px, #245edb 24px, #1a48b4 30px);
    color: #fff;
}

.start {
    gap: 6px;
    width: 94px;
    height: 29px;
    margin-right: 4px;
    padding-right: 10px;
    border-radius: 0 8px 8px 0;
    background: linear-gradient(#74b873 0, #3b953b 4px, #35903a 22px, #28702b 29px);
    box-shadow: 1px 0 2px #153c8c;
    font-size: 19px;
    font-style: italic;
    text-shadow: 1px 1px 1px #1d4a1f;
}

.start svg {
    width: 20px;
    height: 20px;
}

.quick {
    width: 22px;
    height: 24px;
}

.quick.wide {
    width: 40px;
    margin-right: 4px;
    border: 1px solid #4b7ff0;
}

.task {
    justify-content: flex-start;
    gap: 4px;
    width: 155px;
    height: 25px;
    padding-left: 8px;
    border-radius: 2px;
    background-color: #3c81f3;
}

.quick + .task {
    margin-left: 8px;
}

.task.pressed {
    padding-left: 10px;
    background-color: #1e52b7;
    box-shadow: inset 1px 1px 2px #123a8c;
}

.tray {
    align-self: stretch;
    width: 40px;
    margin-left: auto;
    padding-left: 21px;
    background: linear-gradient(#35b0f8, #1290e9 5px, #1088e4);
    font-size: 11px;
    line-height: 30px;
}

/* Context menu */
.context-menu {
    position: absolute;
    top: 373px;
    left: 390px;
    width: 130px;
    padding: 1px;
    border: 1px solid #aca899;
    background-color: #fff;
}

.context-menu button {
    justify-content: flex-start;
    width: 100%;
    height: 20px;
    padding-left: 25px;
}

.context-menu .has-icon {
    gap: 6px;
    padding-left: 3px;
}

.context-menu .selected {
    background-color: #316ac5;
    color: #fff;
}

.context-menu .more {
    width: 5px;
    height: 8px;
    margin-left: auto;
    margin-right: 6px;
}

.context-menu hr {
    height: 1px;
    margin: 3px 1px 4px;
    border: none;
    background-color: #aca899;
}

/* Overlays */
.badge {
    position: absolute;
    top: 577px;
    right: -28px;
    width: 46px;
    height: 46px;
    padding-left: 3px;
    border: 2px solid #e6f5e8;
    border-radius: 50%;
    background: linear-gradient(#7ade83, #27ad47);
    box-shadow: 0 0 2px 1px #888;
    color: #fff;
    font-family: "DejaVu Sans", sans-serif;
    font-size: 10px;
    font-weight: bold;
    line-height: 38px;
}

.watermark {
    position: absolute;
    right: 20px;
    bottom: 0;
    display: flex;
    justify-content: center;
    gap: 4px;
    width: 355px;
    height: 178px;
    padding-top: 50px;
    background-color: #fff;
}

.watermark svg {
    width: 94px;
    height: 78px;
}

.watermark div {
    display: flex;
    flex-direction: column;
    padding-top: 9px;
    white-space: nowrap;
}

.watermark strong {
    font-size: 37px;
    font-style: italic;
    font-weight: 900;
    line-height: 40px;
}

.watermark em {
    font-family: "Noto Sans", sans-serif;
    font-size: 25px;
    font-weight: 500;
    line-height: 28px;
}
```
